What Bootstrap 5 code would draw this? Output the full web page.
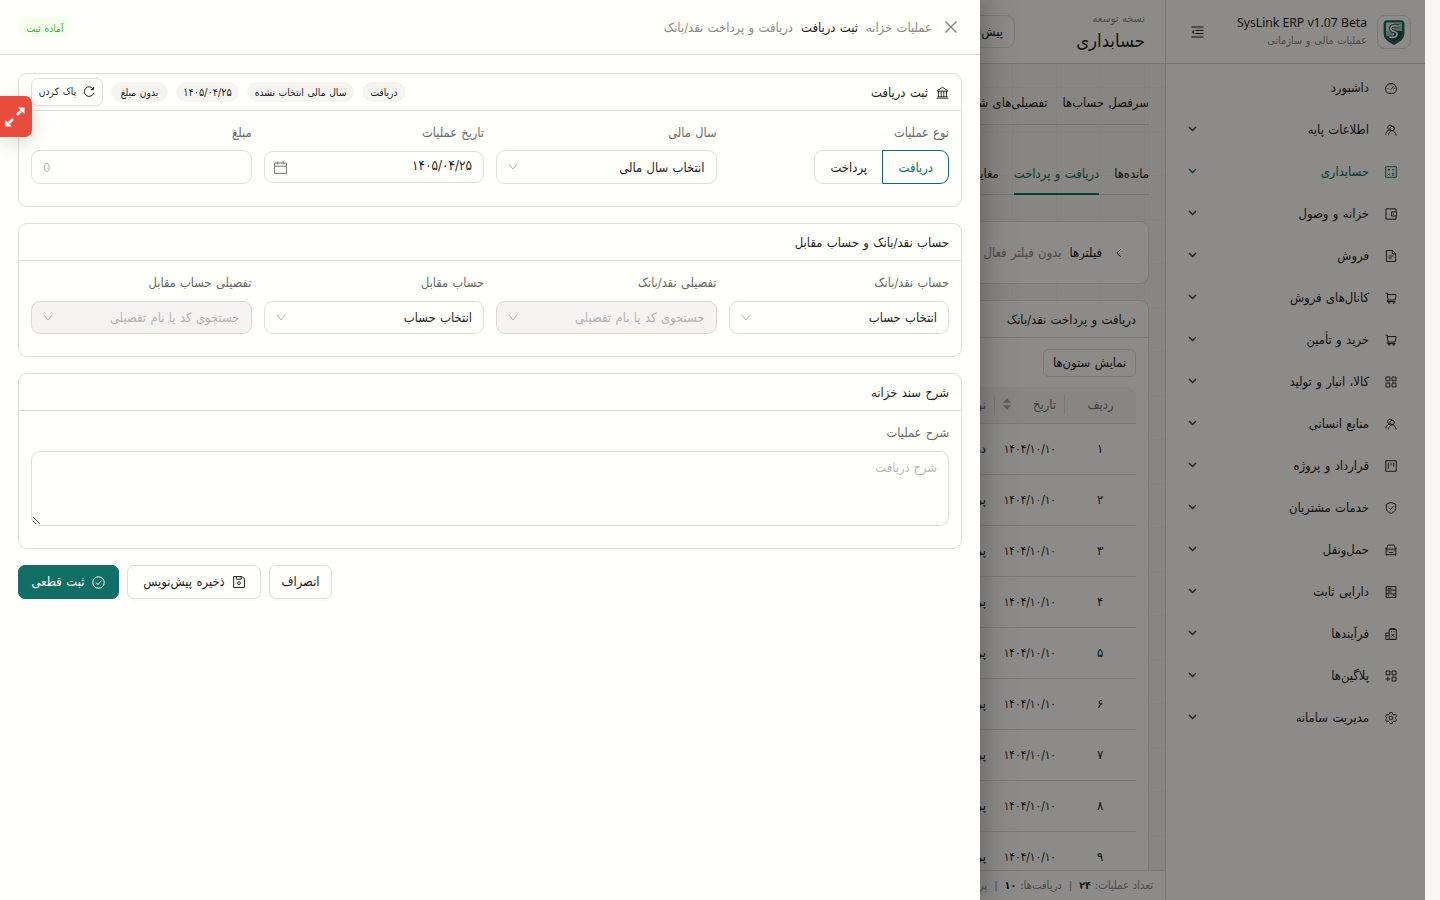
<!DOCTYPE html>
<html lang="fa" dir="rtl">
<head>
<meta charset="utf-8">
<meta name="viewport" content="width=device-width, initial-scale=1">
<title>SysLink ERP</title>
<link href="https://cdn.jsdelivr.net/npm/bootstrap@5.3.0/dist/css/bootstrap.min.css" rel="stylesheet">
<style>
:root{--ink:#1f1f1e;--muted:#8c8b88;--label:#6b6a67;--line:#dfdeda;--paper:#fffffc;--teal:#116e65}
body{font-family:"DejaVu Sans Condensed","DejaVu Sans",sans-serif;font-stretch:condensed;font-size:12.9px;word-spacing:.7px;line-height:20px;color:var(--ink);background:#f9f8f5;overflow:hidden;height:900px;padding-right:15px}
svg{display:block;fill:none;stroke:currentColor;stroke-width:1;flex:none}
.shell{height:900px;overflow:hidden}
.sidebar{width:260px;height:900px;background:#fffdf9;border-left:1px solid #d8d6d0;flex:none}
.brand-row{height:64px;border-bottom:1px solid #d8d6d0;padding:0 14px 0 25px}
.logo-box{width:34px;height:34px;border:1px solid #dedbd4;border-radius:8px}
.brand-name{font-family:"Noto Sans",sans-serif;font-size:12.2px;line-height:18px;direction:ltr;text-align:right;word-spacing:0}
.brand-text{padding-right:10px}
.tiny{font-size:10.8px;line-height:18px;color:var(--muted)}
#menu{padding-top:3px}
.menu-item{height:42px;padding:0 28px 0 22px}
.menu-item .name{padding-right:16px}
.menu-item.on{color:var(--teal)}
.menu-item .chev{color:#444;stroke-width:1.5;margin-bottom:3px}
.menu-item.on .chev{color:var(--teal)}
.main-area{min-width:0;height:900px;background-color:#f6f4ee;background-image:linear-gradient(#f0eee7 1px,transparent 1px),linear-gradient(90deg,#f0eee7 1px,transparent 1px);background-size:44px 44px;background-position:0 43px,44px 0}
.topbar{height:64px;background:#fffdf9;border-bottom:1px solid #d8d6d0;padding-right:20px}
.topbar .titles{width:130px}
.top-btn{height:33px;border:1px solid var(--line);border-radius:9px;padding:0 11px;width:200px;font-size:13px}
.page-title{font-size:18.4px;line-height:26px}
.tabs-a,.tabs-b{gap:15px;border-bottom:1px solid #dad7d0;margin-right:16px;white-space:nowrap}
.tabs-a{height:61px;padding-top:18px}
.tabs-b{height:70px;align-items:flex-end}
.tabs-b>div{height:41px;padding-top:11px}
.tabs-b .on{color:var(--teal);border-bottom:2px solid var(--teal);margin-bottom:-1px;height:42px;padding-top:11px}
.box{background:#fffdf9;border:1px solid var(--line);border-radius:9px;margin-right:16px}
.filter-box{height:63px;margin-top:26px;padding-right:24px}
.list-box{height:590px;margin-top:16px}
.list-title{height:37px;border-bottom:1px solid var(--line);padding:2px 12px 0 0}
.col-btn{width:93px;height:28px;border:1px solid var(--line);border-radius:6px;margin:11px 12px 10px 0}
.grid-row{height:51px;border-bottom:1px solid var(--line);margin-right:12px;align-items:center;white-space:nowrap}
.grid-row.head{height:37px;background:#f6f4f0;color:#777571;border-radius:0 9px 0 0}
.c-num{width:72px;text-align:center;flex:none}
.c-date{width:70px;padding-right:8px;flex:none}
.grid-row:not(.head) .c-date{font-size:11.7px}
.head .c-num,.head .c-date{border-left:1px solid var(--line);line-height:20px}
.c-type{padding-right:8px}
.foot{position:absolute;top:870px;right:260px;left:0;height:30px;background:#fffdf9;border-top:1px solid var(--line);padding-right:12px;font-size:11.2px;gap:7px;color:var(--muted)}
.foot b{color:var(--ink);font-size:10.6px}
.mask-layer{position:absolute;inset:0 15px 0 0;background:rgba(0,0,0,.45)}
.drawer{position:absolute;top:0;left:0;width:980px;height:900px;background:var(--paper);box-shadow:6px 0 16px rgba(0,0,0,.12),9px 0 28px 8px rgba(0,0,0,.08)}
.drawer-head{height:55px;border-bottom:1px solid var(--line);padding:0 22px 0 18px}
.drawer-head>span:not(.pill){padding:2px 8px 0 0}
.drawer-head>span.gray{color:var(--muted)}
.drawer-head>span.lead-in{padding-right:12px}
.pill{height:20px;border-radius:10px;background:#f5f4f1;font-size:10.2px;line-height:21px;text-align:center;white-space:nowrap}
.pill.green{background:#f6ffed;color:#52a836;height:19px}
.drawer-body{padding:18px;gap:16px}
.panel{border:1px solid var(--line);border-radius:9px}
.panel-head{height:37px;border-bottom:1px solid var(--line);padding:2px 12px 0}
.panel-body{padding:12px 12px 22px}
.fields{display:grid;grid-template-columns:repeat(4,1fr);gap:12px}
.lbl{color:var(--label);height:27px;line-height:20px;font-size:12.7px}
.inp{height:34px;border:1px solid var(--line);border-radius:9px;padding:1px 11px 0;display:flex;align-items:center;justify-content:space-between}
.inp svg{color:#b2b1ae;margin-bottom:2px}
.inp.off{background:#f5f4f2;color:#b6b5b2;border-color:#dad9d6}
.h33{height:33px;margin-top:1px}
.h32{height:32px;margin-top:1px;padding-bottom:3px;font-size:13.4px}
.seg{display:flex;width:135px;height:34px}
.seg>div{width:69px;border:1px solid var(--line);border-right:0;border-radius:9px 0 0 9px;line-height:34px;text-align:center}
.seg>div:first-child{width:67px;border:1px solid var(--teal);border-radius:0 9px 9px 0;color:var(--teal)}
.txt{width:918px;height:75px;border:1px solid var(--line);border-radius:9px;padding:6px 11px;background:transparent;display:block;outline:0;resize:vertical;font:inherit}
.txt::placeholder{color:#bbbab7}
.act{height:34px;border:1px solid var(--line);border-radius:7px;display:flex;align-items:center;justify-content:center;gap:8px;box-shadow:0 2px 0 rgba(0,0,0,.02);white-space:nowrap;background:var(--paper)}
.act.go{background:var(--teal);border-color:var(--teal);color:#fff}
.expander{position:absolute;left:0;top:96px;width:32px;height:41px;border-radius:0 7px 7px 0;background:#e74c3c;box-shadow:0 5px 20px rgba(0,0,0,.16);color:#fff}
.expander svg{margin:10px 6px 0 0}
</style>
</head>
<body>
<div class="shell d-flex position-relative">
  <aside class="sidebar">
    <div class="brand-row d-flex align-items-center">
      <div class="logo-box d-flex align-items-center justify-content-center">
        <svg width="24" height="26" viewBox="0 0 26 28"><path d="M3 5Q3 2.500 6 2.500H20Q23 2.500 23 5V16Q23 22 13 26.500Q3 22 3 16Z" fill="#dfe8e0" stroke="#12685a" stroke-width="2.600"/><path d="M13 13H21.700V17Q21 21 13 25Q5 21 4.500 17.500L13 19z" fill="#333d42" stroke="none"/><path d="M13 4h8.500v9H13zM4.300 13H11v6l-6-.5z" fill="#9ac9b2" stroke="none"/><path d="M18 7.500Q9 6 9.500 10.500Q10 13 13.500 13.500Q18 15 15.500 18.500Q13.500 20.500 8 19.500" stroke="#0d6656" stroke-width="4"/><path d="M18 7.500Q9 6 9.500 10.500Q10 13 13.500 13.500Q18 15 15.500 18.500Q13.500 20.500 8 19.500" stroke="#fff" stroke-width="1.800"/></svg>
      </div>
      <div class="flex-grow-1 brand-text">
        <div class="brand-name">SysLink ERP v1.07 Beta</div>
        <div class="tiny">عملیات مالی و سازمانی</div>
      </div>
      <svg width="13" height="12" viewBox="0 0 13 12"><path d="M0.500 1h12M4.500 4.300h8M4.500 7.600h8M.5 11h12"/><path d="M3.200 3.700v4.600L.5 6z" fill="currentColor" stroke="none"/></svg>
    </div>
    <nav id="menu"></nav>
  </aside>

  <main class="main-area flex-grow-1">
    <div class="topbar d-flex align-items-center">
      <div class="titles"><div class="tiny">نسخه توسعه</div><div class="page-title">حسابداری</div></div>
      <div class="top-btn d-flex align-items-center">پیش‌نویس‌ها</div>
    </div>
    <div class="tabs-a d-flex align-items-center pb-0"><div>سرفصل حساب‌ها</div><div>تفصیلی‌های شناور</div></div>
    <div class="tabs-b d-flex"><div>مانده‌ها</div><div class="on">دریافت و پرداخت</div><div>مغایرت‌ها</div></div>
    <div class="box filter-box d-flex align-items-center">
      <svg width="10" height="10" viewBox="0 0 10 10" stroke-width="1.300"><path d="M7 1L3 5l4 4"/></svg>
      <span style="padding-right:12px">فیلترها</span><span class="text-nowrap" style="padding-right:8px;color:#8c8b88">بدون فیلتر فعال</span>
    </div>
    <div class="box list-box">
      <div class="list-title d-flex align-items-center">دریافت و پرداخت نقد/بانک</div>
      <div class="col-btn d-flex align-items-center justify-content-center text-nowrap">نمایش ستون‌ها</div>
      <div class="grid-row head d-flex"><div class="c-num">ردیف</div><div class="c-date d-flex justify-content-between align-items-center">تاریخ
        <svg width="8" height="12" viewBox="0 0 8 12" style="margin:0 0 3px 8px"><path d="M4 0l4 4.800H0zM4 12l4-4.800H0z" fill="#aaa8a3" stroke="none"/></svg></div><div class="c-type">نوع</div></div>
      <div id="rows"></div>
    </div>
  </main>
  <div class="foot d-flex align-items-center text-nowrap"><span>تعداد عملیات: <b>۲۴</b></span><span>|</span><span>دریافت‌ها: <b>۱۰</b></span><span>|</span><span>پرداخت‌ها</span></div>
</div>
<div class="mask-layer"></div>

<section class="drawer">
  <header class="drawer-head d-flex align-items-center">
    <svg width="14" height="14" viewBox="0 0 14 14" style="color:#7d7c79;stroke-width:1.200"><path d="M1.500 1.500l11 11M12.500 1.500l-11 11"/></svg>
    <span class="gray lead-in">عملیات خزانه</span>
    <span>ثبت دریافت</span>
    <span class="gray">دریافت و پرداخت نقد/بانک</span>
    <span class="pill green me-auto" style="width:54px">آماده ثبت</span>
  </header>
  <div class="drawer-body d-flex flex-column">
    <div class="panel" style="height:134px">
      <div class="panel-head d-flex align-items-center">
        <svg width="13" height="13" viewBox="0 0 13 13" style="margin-bottom:1px"><path d="M1 5L6.500 1.200 12 5zM.5 12.200h12M1.500 10.800h10M2.500 5v6M5.200 5v6M7.800 5v6M10.500 5v6" stroke-width=".9"/></svg>
        <span style="padding-right:8px">ثبت دریافت</span>
        <div class="d-flex align-items-center gap-2 me-auto" style="margin-top:-2px">
          <span class="pill" style="width:44px">دریافت</span><span class="pill" style="width:107px">سال مالی انتخاب نشده</span><span class="pill" style="width:63px;font-size:10.8px">۱۴۰۵/۰۴/۲۵</span><span class="pill" style="width:57px">بدون مبلغ</span>
          <div class="act" style="width:72px;height:28px;font-size:10.2px;gap:7px"><svg width="12" height="12" viewBox="0 0 12 12"><path d="M10 2.800A4.800 4.800 0 1 0 10.700 7M10.500.8V3.500H7.800"/></svg>پاک کردن</div>
        </div>
      </div>
      <div class="panel-body fields">
        <div><div class="lbl">نوع عملیات</div><div class="seg"><div>دریافت</div><div>پرداخت</div></div></div>
        <div><div class="lbl">سال مالی</div><div class="inp">انتخاب سال مالی<svg width="10" height="7" viewBox="0 0 10 7"><path d="M.8.8L5 6 9.200.8"/></svg></div></div>
        <div><div class="lbl">تاریخ عملیات</div><div class="inp h32">۱۴۰۵/۰۴/۲۵<svg width="13" height="13" viewBox="0 0 13 13" style="color:#777;margin:2px 0 0 -1px;transform:translateX(-1px)"><path d="M.6 2h11.800v10.400H.6zM.6 5.200h11.800M3.800.3v3.200M9.200.3v3.200"/></svg></div></div>
        <div><div class="lbl">مبلغ</div><div class="inp" dir="ltr" style="color:#bbb;font-size:13px">0</div></div>
      </div>
    </div>
    <div class="panel" style="height:134px">
      <div class="panel-head d-flex align-items-center">حساب نقد/بانک و حساب مقابل</div>
      <div class="panel-body fields">
        <div><div class="lbl">حساب نقد/بانک</div><div class="inp h33">انتخاب حساب<svg width="10" height="7" viewBox="0 0 10 7"><path d="M.8.8L5 6 9.200.8"/></svg></div></div>
        <div><div class="lbl">تفصیلی نقد/بانک</div><div class="inp h33 off">جستجوی کد یا نام تفصیلی<svg width="10" height="7" viewBox="0 0 10 7"><path d="M.8.8L5 6 9.200.8"/></svg></div></div>
        <div><div class="lbl">حساب مقابل</div><div class="inp h33">انتخاب حساب<svg width="10" height="7" viewBox="0 0 10 7"><path d="M.8.8L5 6 9.200.8"/></svg></div></div>
        <div><div class="lbl">تفصیلی حساب مقابل</div><div class="inp h33 off">جستجوی کد یا نام تفصیلی<svg width="10" height="7" viewBox="0 0 10 7"><path d="M.8.8L5 6 9.200.8"/></svg></div></div>
      </div>
    </div>
    <div class="panel" style="height:176px">
      <div class="panel-head d-flex align-items-center">شرح سند خزانه</div>
      <div class="panel-body"><div class="lbl" style="height:28px">شرح عملیات</div><textarea class="txt" placeholder="شرح دریافت"></textarea></div>
    </div>
    <div class="d-flex gap-2 justify-content-end">
      <div class="act" style="width:63px">انصراف</div>
      <div class="act" style="width:134px"><svg width="12" height="12" viewBox="0 0 12 12"><path d="M.6.6h8.600l2.200 2.200v8.600H.6zM3.300.6v2.600h4.900V.6"/><circle cx="6" cy="7.200" r="1.400"/></svg>ذخیره پیش‌نویس</div>
      <div class="act go" style="width:101px"><svg width="13" height="13" viewBox="0 0 13 13"><circle cx="6.500" cy="6.500" r="5.700"/><path d="M4 6.500l2 2.200L9.200 4.500"/></svg>ثبت قطعی</div>
    </div>
  </div>
  <div class="expander"><svg width="22" height="22" viewBox="0 0 22 22"><path d="M13 9l4-4M9 13l-4 4" stroke-width="2.600"/><path d="M14 1.500h6.500V8zM1.500 14v6.500H8z" fill="#fff" stroke="none"/></svg></div>
</section>

<script>
const ic={
dash:'<path d="M3 12.200A5.900 5.900 0 1 1 10 12.200z"/><path d="M6.500 8l2.500-3M6.500 2.500v1M2.700 7h1M9.500 7h1M4 4l.6.600"/>',
team:'<circle cx="7.700" cy="4.800" r="2.400"/><path d="M3.500 12.500C4.200 9.500 5.700 7.300 7.700 7.300s3.800 2.200 4.500 5.200M5 6.800C2.500 7 1 9 .8 11.500M5.200 6.600A2.700 2.700 0 1 1 7.500 2M9 2.500l1.500 2.500"/>',
calc:'<path d="M.7.700h11.600v11.600H.7zM3 4h2.400M4.200 2.800v2.400M7.600 4h2.600M3 8l2.200 2.200M5.200 8L3 10.200M7.600 8h2.600M7.600 10h2.600"/>',
wallet:'<path d="M12 4V.9H1v11.200h11V9M12.500 4.200H7.200v4.500h5.300zM8.800 6.400h1"/>',
doc:'<path d="M1.500.6h6.700l3.300 3.300v8.500h-10zM8 .6v3.500h3.500M3.800 6.500h5.400M3.800 8.800h3.500"/>',
cart:'<path d="M.5 1.200h2l.5 1.500h9l-1 6H3.200L2.500 2M3.200 8.700l-.7 1.600h9"/><circle cx="4.500" cy="11.400" r=".9"/><circle cx="9.500" cy="11.400" r=".9"/>',
grid:'<path d="M1.100 1.100h4.200v4.200H1.100zM7.700 1.100h4.200v4.200H7.700zM1.100 7.700h4.200v4.200H1.100zM7.700 7.700h4.200v4.200H7.700z"/>',
proj:'<path d="M.8.800h11.400v11.400H.8zM3.600 3v6.500M6.500 3v2.800M9.400 3v4.200"/>',
shield:'<path d="M6.500.5l5 1.800v5c0 2.300-2.500 4-5 5.200-2.500-1.200-5-2.900-5-5.200v-5zM4.200 6.300l1.800 1.800 3-3.600"/>',
car:'<path d="M1.200 5.500h10.600v6H1.200zM1.800 5.500L3 1.200h7l1.200 4.300M.2 4.300l1.300 1M12.800 4.300l-1.300 1M4.300 9.200h4.400M2.600 7.500h1M9.400 7.500h1M1.700 11.500v1M11.300 11.500v1"/>',
db:'<path d="M1.200.7h10.600v11.600H1.200zM1.200 4.500h10.600M1.200 8.500h10.600M3 2.600h4M3 6.500h4M3 10.400h1.200M8.500 10h2"/>',
build:'<path d="M4.500 12.300V1.500h7.800v10.800zM.8 12.300V5.500h3.700M.8 12.300h11.500M6 1.500V.5h4.500v1M1 8.500h3.500M6.500 4h1M9.500 4h1M7 6.500l3 3M10 6.500l-3 3"/>',
plug:'<path d="M1.200 1.100h4.100v4.200H1.200zM7.700 1.100h4.200v4.200H7.700zM7.700 7.700h4.200v4.200H7.700zM.7 9.700h4.800M3.100 7.300v4.800"/>',
gear:'<path d="M5.200.7h2.600l.5 1.700 1.300.8 1.700-.5 1.200 2.100-1.200 1.200v1l1.200 1.300-1.200 2.100-1.700-.4-1.300.7-.5 1.700H5.200l-.5-1.700-1.300-.7-1.700.4L.5 8.300 1.700 7V6L.5 4.800l1.200-2.100 1.700.5 1.300-.8z"/><circle cx="6.500" cy="6.500" r="2"/>'};
const items=[['dash','داشبورد'],['team','اطلاعات پایه'],['calc','حسابداری'],['wallet','خزانه و وصول'],['doc','فروش'],['cart','کانال‌های فروش'],['cart','خرید و تأمین'],['grid','کالا، انبار و تولید'],['team','منابع انسانی'],['proj','قرارداد و پروژه'],['shield','خدمات مشتریان'],['car','حمل‌ونقل'],['db','دارایی ثابت'],['build','فرآیندها'],['plug','پلاگین‌ها'],['gear','مدیریت سامانه']];
document.getElementById('menu').innerHTML=items.map(([k,t],i)=>`<div class="menu-item d-flex align-items-center${i==2?' on':''}"><svg width="12" height="12" viewBox="0 0 13 13">${ic[k]}</svg><span class="flex-grow-1 name">${t}</span>${i?'<svg class="chev" width="9" height="6" viewBox="0 0 9 6"><path d="M1 1l3.500 3.500L8 1"/></svg>':''}</div>`).join('');
document.getElementById('rows').innerHTML=[...'۱۲۳۴۵۶۷۸۹'].map((n,i)=>`<div class="grid-row d-flex"><div class="c-num">${n}</div><div class="c-date">۱۴۰۴/۱۰/۱۰</div><div class="c-type">${i?'پرداخت':'دریافت'}</div></div>`).join('');
</script>
</body>
</html>
